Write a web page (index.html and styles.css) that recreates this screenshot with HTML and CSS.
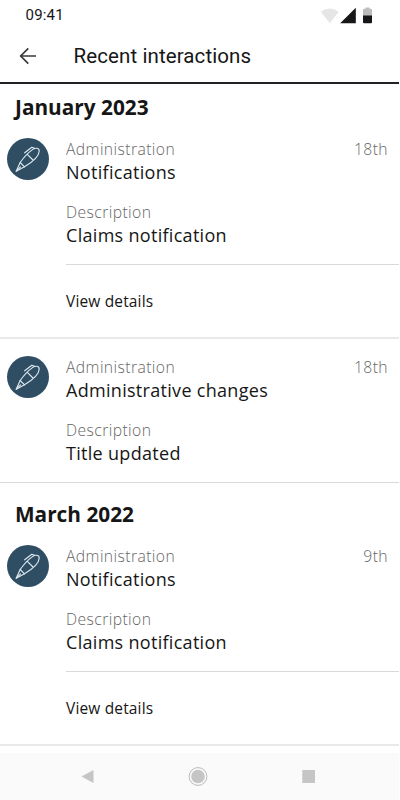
FILE: index.html
```html
<!DOCTYPE html>
<html lang="en">
<head>
<meta charset="utf-8">
<title>Recent interactions</title>
<link rel="stylesheet" href="styles.css">
</head>
<body>
<svg class="defs" aria-hidden="true">
  <symbol id="pen" viewBox="0 0 42 42">
    <g fill="none" stroke="#dce8f0" stroke-width="1.15" stroke-linejoin="round" stroke-linecap="round">
      <path d="M9.200 33.200 L13.200 24.500 C16 20.500 20 15.500 25.500 11.600 C28.500 9.500 32.300 9.700 32.200 13.200 C32 17.500 27 23 17.500 28.800 Z"/>
      <path d="M13.200 24.500 L17.500 28.800 M20.300 16.300 L25.500 21.500 M9.200 33.200 L13.500 28.900"/>
      <path d="M27.500 10.400 L24.800 9.300 L17.700 14.800"/>
    </g>
  </symbol>
</svg>
<div class="screen">
  <div class="status">
    <span class="time">09:41</span>
    <svg class="indicators" width="54" height="20" viewBox="0 0 54 20">
      <path fill="#e6e6e6" d="M0.800 4.800 Q9.800-1.800 18.800 4.800 L9.800 16.200Z"/>
      <path fill="#171719" d="M20.200 16.200 L35.800 .800 V16.200Z"/>
      <path fill="#bcbcbc" d="M43 3 Q43 1.800 44.200 1.800 H45.500 V.500 H49.500 V1.800 H50.800 Q52 1.800 52 3 V9 H43Z"/>
      <path fill="#171719" d="M43 8.500 H52 V15.200 Q52 16.200 51 16.200 H44 Q43 16.200 43 15.200Z"/>
    </svg>
  </div>
  <header class="bar">
    <svg class="back" width="18" height="18" viewBox="0 0 18 18" fill="none" stroke="#3a3a3a" stroke-width="1.7"><path d="M17 9 H2 M9.300 1.400 L1.700 9 L9.300 16.600"/></svg>
    <h1 class="title">Recent interactions</h1>
  </header>
  <main class="list">
    <h2 class="month">January 2023</h2>
    <article class="item thick">
      <svg class="avatar"><use href="#pen"/></svg>
      <div class="body">
        <div class="row"><span class="label">Administration</span><span class="label">18th</span></div>
        <div class="value">Notifications</div>
        <div class="label gap">Description</div>
        <div class="value">Claims notification</div>
        <div class="details">View details</div>
      </div>
    </article>
    <article class="item">
      <svg class="avatar"><use href="#pen"/></svg>
      <div class="body">
        <div class="row"><span class="label">Administration</span><span class="label">18th</span></div>
        <div class="value">Administrative changes</div>
        <div class="label gap">Description</div>
        <div class="value">Title updated</div>
      </div>
    </article>
    <h2 class="month later">March 2022</h2>
    <article class="item thick">
      <svg class="avatar"><use href="#pen"/></svg>
      <div class="body">
        <div class="row"><span class="label">Administration</span><span class="label">9th</span></div>
        <div class="value">Notifications</div>
        <div class="label gap">Description</div>
        <div class="value">Claims notification</div>
        <div class="details">View details</div>
      </div>
    </article>
  </main>
  <nav class="nav">
    <svg width="398" height="47" viewBox="0 0 398 47" fill="#c5c5c5">
      <path d="M81.500 23.500 L93.500 17 V30Z"/>
      <circle cx="198" cy="23.500" r="6.800"/>
      <circle cx="198" cy="23.500" r="8.900" fill="none" stroke="#b9b9b9" stroke-width="1"/>
      <rect x="302.300" y="17" width="12.700" height="13"/>
    </svg>
  </nav>
</div>
</body>
</html>
```
FILE: styles.css
```css
* { box-sizing: border-box; }
body {
  margin: 0;
  background: #fff;
  color: #161616;
  font-family: "Open Sans", "Noto Sans", sans-serif;
}
.defs { display: none; }
.screen {
  width: 398.5px;
  height: 800px;
  display: flex;
  flex-direction: column;
  overflow: hidden;
}
.status {
  height: 30px;
  flex: none;
  display: flex;
  justify-content: space-between;
  padding: 7px 25.500px 0 25.500px;
  font: 400 15px/17px Roboto, sans-serif;
}
.time { letter-spacing: .2px; }
.indicators { flex: none; margin-right: -.5px; }
.bar {
  height: 54px;
  flex: none;
  display: flex;
  align-items: center;
  padding: 0 0 1px 19px;
  border-bottom: 2px solid #202124;
}
.back { flex: none; margin-top: 0; }
.title {
  margin: 1px 0 0 36.500px;
  font: 400 20.500px/24px Roboto, sans-serif;
  letter-spacing: .1px;
}
.list { flex: none; height: 669px; }
.month {
  margin: 0;
  height: 37px;
  padding: 8px 0 0 15px;
  font-size: 20.800px;
  line-height: 30px;
  font-weight: 700;
}
.later { height: 45px; padding-top: 16px; }
.item {
  display: flex;
  padding: 17px 0 0 7px;
  border-bottom: 1px solid #d9d9d9;
}
.thick { border-bottom: 2px solid #e9e9e9; }
.avatar {
  flex: none;
  width: 42px;
  height: 42px;
  border-radius: 50%;
  background: #2f4e63;
}
.body { flex: 1; margin-left: 17px; padding-bottom: 17px; }
.row { display: flex; justify-content: space-between; padding-right: 10.500px; }
.label {
  font-size: 15.700px;
  line-height: 23px;
  font-weight: 350;
  letter-spacing: .42px;
  color: #666;
}
.value { font-size: 18px; line-height: 23px; letter-spacing: .3px; }
.gap { margin-top: 17px; }
.details {
  margin: 17px 0 -17px;
  height: 73px;
  border-top: 1px solid #d9d9d9;
  font-size: 15.500px;
  line-height: 73px;
  letter-spacing: .15px;
}
.nav { height: 47px; flex: none; background: #fafafa; }
.nav svg { display: block; }
```
